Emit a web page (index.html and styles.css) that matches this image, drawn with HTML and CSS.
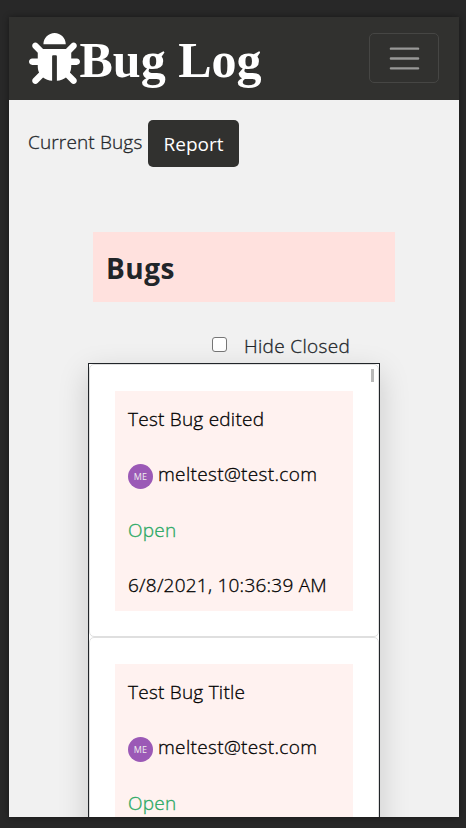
FILE: index.html
```html
<!DOCTYPE html>
<html lang="en">
<head>
<meta charset="utf-8">
<title>Bug Log</title>
<link rel="stylesheet" href="styles.css">
</head>
<body>
<div class="app">
  <header class="navbar">
    <a class="brand">
      <svg class="brand-icon" viewBox="0 0 512 512" fill="currentColor"><path d="M511.988 288.9c-.478 17.43-15.217 31.1-32.653 31.1H424v16c0 21.864-4.882 42.584-13.6 61.145l60.228 60.228c12.496 12.497 12.496 32.758 0 45.255-12.498 12.497-32.759 12.496-45.256 0l-54.736-54.736C345.886 467.965 314.351 480 280 480V236c0-6.627-5.373-12-12-12h-24c-6.627 0-12 5.373-12 12v244c-34.351 0-65.886-12.035-90.636-32.108l-54.736 54.736c-12.498 12.497-32.759 12.496-45.256 0-12.496-12.497-12.496-32.758 0-45.255l60.228-60.228C92.882 378.584 88 357.864 88 336v-16H32.666C15.23 320 .491 306.33.013 288.9-.484 270.816 14.028 256 32 256h56v-58.745l-46.628-46.628c-12.496-12.497-12.496-32.758 0-45.255 12.498-12.497 32.758-12.497 45.256 0L141.255 160h229.489l54.627-54.627c12.498-12.497 32.758-12.497 45.256 0 12.496 12.497 12.496 32.758 0 45.255L424 197.255V256h56c17.972 0 32.484 14.816 31.988 32.9zM257 0c-61.856 0-112 50.144-112 112h224C369 50.144 318.856 0 257 0z"/></svg>
      <span class="brand-name">Bug Log</span>
    </a>
    <button class="toggler" aria-label="Menu">
      <svg viewBox="0 0 30 30" width="37" height="37"><path d="M4 7h22M4 15h22M4 23h22" stroke="currentColor" stroke-width="2" stroke-linecap="round" stroke-miterlimit="10"/></svg>
    </button>
  </header>
  <div class="actions">
    <span class="current">Current Bugs</span>
    <button class="report">Report</button>
  </div>
  <h1 class="heading">Bugs</h1>
  <label class="filter"><span class="box"></span><span class="filter-text">Hide Closed</span></label>
  <div class="list">
    <span class="thumb"></span>
    <article class="card">
      <div class="card-body">
        <p class="title">Test Bug edited</p>
        <p class="user"><span class="avatar">ME</span><span class="email">meltest@test.com</span></p>
        <p class="status">Open</p>
        <p class="date">6/8/2021, 10:36:39 AM</p>
      </div>
    </article>
    <article class="card">
      <div class="card-body">
        <p class="title">Test Bug Title</p>
        <p class="user"><span class="avatar">ME</span><span class="email">meltest@test.com</span></p>
        <p class="status">Open</p>
      </div>
    </article>
  </div>
</div>
</body>
</html>
```
FILE: styles.css
```css
* { box-sizing: border-box; }
body {
  margin: 0;
  height: 828px;
  padding: 17px 7px 11px 9px;
  overflow: hidden;
  background: #282828;
  font-family: "Open Sans", "Noto Sans", sans-serif;
  font-size: 19px;
  line-height: 30px;
  color: #212529;
}
p, h1 { margin: 0; white-space: nowrap; }
.app {
  height: 800px;
  overflow: hidden;
  background: #f1f1f1;
  box-shadow: 0 0 6px rgba(0, 0, 0, 0.4);
}
.navbar {
  display: flex;
  justify-content: space-between;
  height: 83px;
  padding: 16px 20px 0 19.5px;
  background: #31312f;
}
.brand { display: flex; color: #fff; }
.brand-icon { width: 51px; height: 51px; }
.brand-name {
  font: bold 50px/54px "Liberation Serif", serif;
  white-space: nowrap;
}
.toggler {
  display: flex;
  align-items: center;
  justify-content: center;
  width: 70px;
  height: 50px;
  padding: 0;
  border: 1px solid #464644;
  border-radius: 5px;
  background: none;
  color: #989897;
}
.actions {
  display: flex;
  gap: 6px;
  padding: 20px 0 0 19px;
}
.current {
  width: 114px;
  padding-top: 7px;
  white-space: nowrap;
  font-weight: 300;
  letter-spacing: 0.15px;
  -webkit-text-stroke: 0.3px currentColor;
}
.report {
  width: 91px;
  height: 47px;
  padding: 0;
  border: 0;
  border-radius: 5px;
  background: #31312f;
  color: #fff;
  font: 19px/30px "Open Sans", sans-serif;
}
.heading {
  width: 302px;
  height: 70px;
  margin: 65px 0 0 84px;
  padding: 1px 13px 0;
  background: #ffe1de;
  font-size: 28px;
  line-height: 70px;
  font-weight: 700;
  letter-spacing: 0.5px;
}
.filter {
  display: flex;
  align-items: center;
  height: 30px;
  margin: 28px 0 3px 203px;
  padding-top: 2px;
  font-weight: 300;
  letter-spacing: 0.33px;
}
.filter-text { -webkit-text-stroke: 0.3px currentColor; }
.box {
  width: 15px;
  height: 15px;
  margin: -4px 17px 0 0;
  border: 1px solid #767676;
  border-radius: 3px;
  background: #fff;
}
.list {
  position: relative;
  width: 292px;
  height: 600px;
  margin-left: 79px;
  border: 1px solid #212529;
  background: #fff;
  box-shadow: 0 10px 28px rgba(0, 0, 0, 0.17);
  color: #000;
  font-weight: 300;
  letter-spacing: 0.24px;
  -webkit-text-stroke: 0.3px currentColor;
}
.thumb {
  position: absolute;
  top: 5px;
  right: 5px;
  width: 3px;
  height: 13px;
  background: #b8b8b8;
}
.card {
  height: 273px;
  padding: 26px 25px;
  border: 1px solid #dfdfdf;
  border-radius: 5px;
}
.card-body {
  width: 238px;
  height: 220px;
  padding: 13px 13px 0;
  background: #fff2f0;
}
.card-body p { height: 30px; margin-bottom: 25.4px; }
.user { display: flex; align-items: center; }
.email { letter-spacing: 0.34px; }
.avatar {
  width: 25px;
  height: 25px;
  margin: 4px 5px 0 0;
  border-radius: 50%;
  background: #9b59b6;
  color: #eee;
  font: 9px/25px "Open Sans", sans-serif;
  text-align: center;
  -webkit-text-stroke: 0;
}
.status { color: #27a862; }
```
